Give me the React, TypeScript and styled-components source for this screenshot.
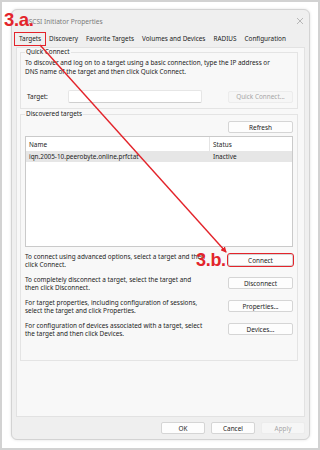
import { createGlobalStyle, styled } from "styled-components";

const GlobalStyle = createGlobalStyle`
  html, body {
    margin: 0;
    padding: 0;
    background: #ffffff;
  }
  body {
    font-family: "Noto Sans", "Open Sans", sans-serif;
    color: #1c1c1c;
  }
`;

const RED = "#e3242b";

const Frame = styled.div`
  position: relative;
  width: 320px;
  height: 450px;
  box-sizing: border-box;
  padding: 9px 10px 10px 11px;
  background: #ffffff;
  box-shadow: inset 0 0 0 2px #d2d2d2;
`;

const Window = styled.div`
  width: 299px;
  height: 431px;
  box-sizing: border-box;
  display: flex;
  flex-direction: column;
  background: #efefef;
  border: 1px solid #d3d3d3;
  border-radius: 6px;
  box-shadow: 0 0 3px rgba(0, 0, 0, 0.12);
`;

const TitleBar = styled.div`
  height: 22px;
  display: flex;
  align-items: center;
  justify-content: space-between;
  padding: 0 6px 0 15px;
  font-size: 6.6px;
  color: #7a7a7a;
`;

const CloseIcon = styled.svg`
  width: 6px;
  height: 6px;
  stroke: #a8a8a8;
  stroke-width: 0.8;
`;

const TabStrip = styled.div`
  height: 15px;
  display: flex;
  align-items: flex-start;
  padding: 1px 0 0 3px;
  box-sizing: border-box;
`;

const Tab = styled.div<{ $marked?: boolean }>`
  height: 12px;
  line-height: 12px;
  padding: 0 4px;
  font-size: 6.4px;
  white-space: nowrap;
  box-sizing: border-box;
  outline: ${(p) => (p.$marked ? `1.5px solid ${RED}` : "none")};
  outline-offset: -0.5px;
`;

const Panel = styled.div`
  flex: 1;
  margin: 0 4px;
  background: #f8f8f8;
  border: 1px solid #e2e2e2;
  padding: 0 6px 0 3px;
  display: flex;
  flex-direction: column;
  gap: 1px;
`;

const Group = styled.fieldset<{ $bottom: number }>`
  margin: 0;
  padding: 0 4px ${(p) => p.$bottom}px;
  border: 1px solid #e4e4e4;
  font-size: 6.4px;
  min-width: 0;
`;

const Legend = styled.legend`
  padding: 0 1px;
  margin-left: 0;
  line-height: 8px;
  font-size: 6.4px;
`;

const Text = styled.p`
  margin: 0;
  line-height: 9px;
  white-space: nowrap;
`;

const TargetRow = styled.div`
  margin-top: 14px;
  display: flex;
  align-items: center;
  height: 13px;
`;

const FieldLabel = styled.span`
  margin-left: 2px;
  width: 41px;
`;

const Input = styled.div`
  width: 134px;
  height: 13px;
  box-sizing: border-box;
  background: #ffffff;
  border: 1px solid #e6e6e6;
  border-bottom-color: #cfcfcf;
  border-radius: 2px;
`;

const Button = styled.div<{ $w?: number; $disabled?: boolean; $marked?: boolean }>`
  width: ${(p) => p.$w ?? 65}px;
  height: 12px;
  box-sizing: border-box;
  display: flex;
  align-items: center;
  justify-content: center;
  background: ${(p) => (p.$disabled ? "#f6f6f6" : "#fdfdfd")};
  border: 1px solid ${(p) => (p.$disabled ? "#ececec" : "#d5d5d5")};
  border-radius: 2px;
  font-size: 6.4px;
  color: ${(p) => (p.$disabled ? "#a6a6a6" : "#1c1c1c")};
  white-space: nowrap;
  flex-shrink: 0;
  outline: ${(p) => (p.$marked ? `1.5px solid ${RED}` : "none")};
  outline-offset: 0.5px;
`;

const Spacer = styled.div`
  flex: 1;
`;

const RightAlign = styled.div`
  display: flex;
  justify-content: flex-end;
  margin-top: 3px;
`;

const ListView = styled.div`
  margin-top: 3px;
  height: 111px;
  box-sizing: border-box;
  background: #ffffff;
  border: 1px solid #cacaca;
`;

const ListRow = styled.div<{ $header?: boolean }>`
  display: flex;
  height: ${(p) => (p.$header ? 14 : 11)}px;
  align-items: center;
  background: ${(p) => (p.$header ? "#ffffff" : "#e6e6e6")};
`;

const Cell = styled.div<{ $w?: number; $divider?: boolean }>`
  width: ${(p) => (p.$w ? `${p.$w}px` : "auto")};
  flex: ${(p) => (p.$w ? "none" : 1)};
  height: 100%;
  display: flex;
  align-items: center;
  padding-left: 3px;
  box-sizing: border-box;
  border-right: ${(p) => (p.$divider ? "1px solid #e4e4e4" : "none")};
  white-space: nowrap;
`;

const Actions = styled.div`
  margin-top: 6px;
  display: flex;
  flex-direction: column;
  gap: 7px;
`;

const ActionRow = styled.div`
  display: flex;
  justify-content: space-between;
  align-items: flex-start;
  height: 16px;
`;

const ActionText = styled.p`
  margin: 0;
  line-height: 8px;
  white-space: nowrap;
`;

const ActionButton = styled(Button)`
  margin-top: 1px;
`;

const Footer = styled.div`
  height: 22px;
  display: flex;
  align-items: center;
  justify-content: flex-end;
  gap: 6px;
  padding-right: 4px;
`;

const Callout = styled.span<{ $x: number; $y: number; $size: number }>`
  position: absolute;
  left: ${(p) => p.$x}px;
  top: ${(p) => p.$y}px;
  font-family: "Liberation Sans", Arial, sans-serif;
  font-weight: bold;
  font-size: ${(p) => p.$size}px;
  line-height: 1;
  color: ${RED};
  letter-spacing: -0.3px;
  white-space: nowrap;
`;

const Overlay = styled.svg`
  position: absolute;
  left: 0;
  top: 0;
  width: 320px;
  height: 450px;
  pointer-events: none;
`;

const actions = [
  {
    lines: ["To connect using advanced options, select a target and then", "click Connect."],
    label: "Connect",
    marked: true,
  },
  {
    lines: ["To completely disconnect a target, select the target and", "then click Disconnect."],
    label: "Disconnect",
  },
  {
    lines: ["For target properties, including configuration of sessions,", "select the target and click Properties."],
    label: "Properties...",
  },
  {
    lines: ["For configuration of devices associated with a target, select", "the target and then click Devices."],
    label: "Devices...",
  },
];

const tabs = ["Targets", "Discovery", "Favorite Targets", "Volumes and Devices", "RADIUS", "Configuration"];

export default function App() {
  return (
    <>
      <GlobalStyle />
      <Frame>
        <Window>
          <TitleBar>
            <span>iSCSI Initiator Properties</span>
            <CloseIcon viewBox="0 0 6 6">
              <line x1="0" y1="0" x2="6" y2="6" />
              <line x1="6" y1="0" x2="0" y2="6" />
            </CloseIcon>
          </TitleBar>
          <TabStrip>
            {tabs.map((t, i) => (
              <Tab key={t} $marked={i === 0}>
                {t}
              </Tab>
            ))}
          </TabStrip>
          <Panel>
            <Group $bottom={5}>
              <Legend>Quick Connect</Legend>
              <Text style={{ marginTop: 2 }}>
                To discover and log on to a target using a basic connection, type the IP address or
              </Text>
              <Text>DNS name of the target and then click Quick Connect.</Text>
              <TargetRow>
                <FieldLabel>Target:</FieldLabel>
                <Input />
                <Spacer />
                <Button $disabled>Quick Connect...</Button>
              </TargetRow>
            </Group>
            <Group $bottom={22}>
              <Legend>Discovered targets</Legend>
              <RightAlign>
                <Button>Refresh</Button>
              </RightAlign>
              <ListView>
                <ListRow $header>
                  <Cell $w={184} $divider>
                    Name
                  </Cell>
                  <Cell>Status</Cell>
                </ListRow>
                <ListRow>
                  <Cell $w={184}>iqn.2005-10.peerobyte.online.prfctat</Cell>
                  <Cell>Inactive</Cell>
                </ListRow>
              </ListView>
              <Actions>
                {actions.map((a) => (
                  <ActionRow key={a.label}>
                    <ActionText>
                      {a.lines[0]}
                      <br />
                      {a.lines[1]}
                    </ActionText>
                    <ActionButton $marked={a.marked}>{a.label}</ActionButton>
                  </ActionRow>
                ))}
              </Actions>
            </Group>
          </Panel>
          <Footer>
            <Button $w={44}>OK</Button>
            <Button $w={44}>Cancel</Button>
            <Button $w={44} $disabled>
              Apply
            </Button>
          </Footer>
        </Window>
        <Overlay viewBox="0 0 320 450">
          <defs>
            <marker id="head" markerWidth="6" markerHeight="6" refX="5" refY="3" orient="auto" markerUnits="userSpaceOnUse">
              <path d="M0,0 L6,3 L0,6 Z" fill={RED} />
            </marker>
          </defs>
          <line x1="40" y1="45" x2="226" y2="252" stroke={RED} strokeWidth="1.4" markerEnd="url(#head)" />
        </Overlay>
        <Callout $x={4} $y={11} $size={18.5}>
          3.a.
        </Callout>
        <Callout $x={196} $y={251} $size={18}>
          3.b.
        </Callout>
      </Frame>
    </>
  );
}
